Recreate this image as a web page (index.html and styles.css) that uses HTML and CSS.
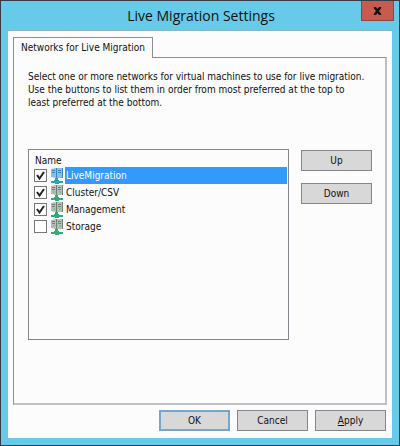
FILE: index.html
```html
<!DOCTYPE html>
<html lang="en">
<head>
    <meta charset="UTF-8">
    <meta name="viewport" content="width=device-width, initial-scale=1.0">
    <title>Live Migration Settings</title>
    <link rel="stylesheet" href="styles.css">
</head>
<body>
    <svg class="symbols" width="0" height="0" aria-hidden="true">
        <symbol id="network" viewBox="0 0 14 17">
            <path class="server" d="M1 2l5-1v10l-5-1zM7 1h5v10l-5 0z"/>
            <path class="slots" d="M2 3.5h3M2 5.5h3M8 3.5h3M8 5.5h3"/>
            <path class="edge" d="M6.5 1v10M12.5 1v10"/>
            <path class="lights" d="M3 8h2M9 8h2"/>
            <path class="cable" d="M5 11h3v2h1v1h4v2H9v1H5v-1H1v-2h3v-1h1z"/>
        </symbol>
    </svg>
    <div class="window">
        <header class="titlebar">
            <h1>Live Migration Settings</h1>
            <button type="button" class="close" aria-label="Close">
                <svg width="9" height="8" viewBox="0 0 9 8"><path d="M1.5 0l6 8M7.5 0l-6 8"/></svg>
            </button>
        </header>
        <form class="client">
            <div class="tabs" role="tablist">
                <button type="button" class="tab" role="tab" aria-selected="true">Networks for Live Migration</button>
            </div>
            <section class="panel">
                <p>Select one or more networks for virtual machines to use for live migration.<br>Use the buttons to list them in order from most preferred at the top to<br>least preferred at the bottom.</p>
                <div class="networks">
                    <div class="list">
                        <div class="list-header">Name</div>
                        <label class="row selected">
                            <input type="checkbox" checked>
                            <svg class="icon"><use href="#network"/></svg>
                            <span>LiveMigration</span>
                        </label>
                        <label class="row">
                            <input type="checkbox" checked>
                            <svg class="icon"><use href="#network"/></svg>
                            <span>Cluster/CSV</span>
                        </label>
                        <label class="row">
                            <input type="checkbox" checked>
                            <svg class="icon"><use href="#network"/></svg>
                            <span>Management</span>
                        </label>
                        <label class="row">
                            <input type="checkbox">
                            <svg class="icon"><use href="#network"/></svg>
                            <span>Storage</span>
                        </label>
                    </div>
                    <div class="order">
                        <button type="button" class="btn">Up</button>
                        <button type="button" class="btn">Down</button>
                    </div>
                </div>
            </section>
            <footer class="actions">
                <button type="submit" class="btn default">OK</button>
                <button type="button" class="btn">Cancel</button>
                <button type="button" class="btn"><u>A</u>pply</button>
            </footer>
        </form>
    </div>
</body>
</html>
```
FILE: styles.css
```css
* {
    box-sizing: border-box;
}
body {
    margin: 0;
    font-family: Tahoma, "DejaVu Sans Condensed", sans-serif;
    font-size: 10px;
    line-height: 13px;
    color: #111;
}
button {
    font: inherit;
    color: inherit;
}
.symbols {
    position: absolute;
}
.window {
    display: flex;
    flex-direction: column;
    min-height: 100vh;
    padding: 0 7px 7px;
    border: 1px solid #353c45;
    background-color: #66cae8;
}
.titlebar {
    display: grid;
    grid-template-columns: 1fr auto 1fr;
    align-items: start;
    height: 29px;
    margin-right: -2px;
}
.titlebar h1 {
    grid-column: 2;
    margin: 0;
    font-family: "Segoe UI", "Open Sans", sans-serif;
    font-size: 14px;
    font-weight: normal;
    line-height: 29px;
}
.close {
    justify-self: end;
    display: flex;
    align-items: center;
    justify-content: center;
    width: 33px;
    height: 20px;
    padding: 0;
    border: 1px solid #8c4640;
    border-top: 0;
    background-color: #c75b50;
}
.close path {
    stroke: #111;
    stroke-width: 2.4;
}
.client {
    flex: 1;
    display: flex;
    flex-direction: column;
    padding: 6px 5px 7px;
    border-top: 1px solid #8bb5c4;
    background-color: #fcfcfc;
}
.tabs {
    display: flex;
    position: relative;
    z-index: 1;
    margin-bottom: -1px;
}
.tab {
    height: 21px;
    padding: 0 7px 2px;
    border: 1px solid #8e8e96;
    border-bottom: 0;
    background-color: #fcfcfc;
}
.panel {
    flex: 1;
    padding: 12px 13px 12px 14px;
    border: 1px solid #8e8e96;
    border-right: 2px solid #bfc0c6;
    border-bottom: 2px solid #bfc0c6;
}
.panel p {
    margin: 0;
    white-space: nowrap;
}
.networks {
    display: flex;
    gap: 12px;
    margin-top: 40px;
}
.list {
    flex: 1;
    height: 191px;
    padding: 4px 1px 1px 5px;
    border: 1px solid #85858c;
}
.list-header {
    padding-left: 1px;
}
.row {
    display: flex;
    align-items: center;
    height: 17px;
}
.row input {
    appearance: none;
    width: 13px;
    height: 13px;
    margin: 0 3px 0 0;
    border: 1px solid #777;
    background-color: #fff;
}
.row input:checked {
    background-image: url("data:image/svg+xml,%3Csvg xmlns='http://www.w3.org/2000/svg' viewBox='0 0 11 11'%3E%3Cpath d='M2 5l2.5 3.5L9 2' fill='none' stroke='%23222' stroke-width='2'/%3E%3C/svg%3E");
}
.icon {
    --case: #b4bdb8;
    --lines: #747e79;
    --led: #49d84d;
    --cable: #2fae74;
    width: 14px;
    height: 17px;
    margin-right: 1px;
}
.selected .icon {
    --case: #86bfe8;
    --lines: #3d84bd;
    --led: #5fd6d0;
    --cable: #2ba3b5;
}
.server {
    fill: var(--case);
}
.slots,
.edge {
    stroke: var(--lines);
}
.lights {
    stroke: var(--led);
}
.cable {
    fill: var(--cable);
}
.row span {
    flex: 1;
    padding-left: 1px;
    line-height: 17px;
}
.selected span {
    background-color: #3399ff;
    color: #fff;
}
.order {
    display: flex;
    flex-direction: column;
    gap: 12px;
    margin-top: 1px;
}
.btn {
    width: 71px;
    height: 21px;
    padding: 0;
    border: 1px solid #85858a;
    background-color: #d8d8d8;
}
.default {
    border: 2px solid #78a6c9;
}
.actions {
    display: flex;
    justify-content: flex-end;
    gap: 7px;
    margin: 5px 1px 0 0;
}
```
